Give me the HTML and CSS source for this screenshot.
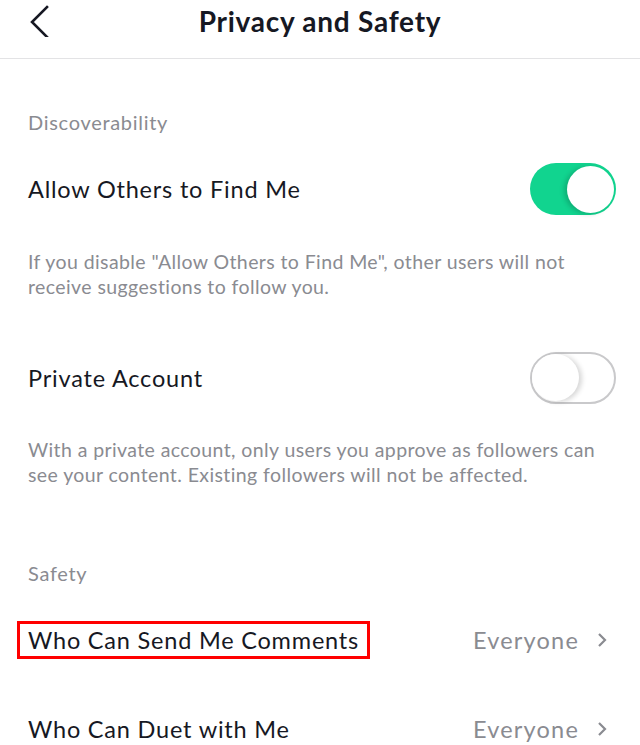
FILE: index.html
```html
<!DOCTYPE html>
<html>
<head>
<meta charset="utf-8">
<link rel="stylesheet" href="styles.css">
</head>
<body>
<header class="topbar">
  <svg class="back" width="24" height="36" viewBox="0 0 24 36"><polyline points="17,6 2,21 17,36" fill="none" stroke="#161823" stroke-width="2.6" stroke-linecap="square"/></svg>
  <h1 class="title">Privacy and Safety</h1>
</header>
<main class="content">
  <div class="section-label first">Discoverability</div>
  <div class="toggle-row">
    <span class="row-title">Allow Others to Find Me</span>
    <span class="switch on"><span class="knob"></span></span>
  </div>
  <p class="desc">If you disable "Allow Others to Find Me", other users will not receive suggestions to follow you.</p>
  <div class="toggle-row second">
    <span class="row-title">Private Account</span>
    <span class="switch off"><span class="knob"></span></span>
  </div>
  <p class="desc desc2">With a private account, only users you approve as followers can see your content. Existing followers will not be affected.</p>
  <div class="section-label safety">Safety</div>
  <div class="link-row">
    <span class="row-title highlighted">Who Can Send Me Comments</span>
    <span class="value">Everyone<svg class="chev" width="12" height="16" viewBox="0 0 12 16"><polyline points="3,2 9,8 3,14" fill="none" stroke="#8a8b91" stroke-width="2.2"/></svg></span>
  </div>
  <div class="link-row">
    <span class="row-title">Who Can Duet with Me</span>
    <span class="value">Everyone<svg class="chev" width="12" height="16" viewBox="0 0 12 16"><polyline points="3,2 9,8 3,14" fill="none" stroke="#8a8b91" stroke-width="2.2"/></svg></span>
  </div>
</main>
</body>
</html>
```
FILE: styles.css
```css
* { box-sizing: border-box; }
html, body { margin: 0; padding: 0; background: #fff; overflow: hidden; }
body { font-family: "Lato", "Liberation Sans", sans-serif; color: #161823; width: 640px; height: 745px; }

.topbar {
  position: relative;
  height: 59px;
  border-bottom: 1px solid #e3e3e5;
  display: flex;
  align-items: flex-start;
  justify-content: center;
}
.back { position: absolute; left: 30px; top: 1px; }
.title {
  margin: 0;
  font-size: 28px;
  font-weight: 700;
  line-height: 42px;
  letter-spacing: 0.75px;
}

.content { padding: 0 24px 0 28px; }

.section-label {
  height: 44px;
  line-height: 44px;
  font-size: 20px;
  letter-spacing: 0.7px;
  color: #8a8b91;
}
.section-label.first { margin-top: 41px; }
.section-label.safety { margin-top: 64px; }

.toggle-row {
  display: flex;
  align-items: center;
  justify-content: space-between;
  height: 52px;
  margin-top: 19px;
}
.toggle-row.second { margin-top: 53px; }

.row-title { font-size: 23.5px; line-height: 30px; letter-spacing: 0.8px; }

.switch {
  position: relative;
  width: 86px;
  height: 52px;
  border-radius: 26px;
}
.switch.on { background: #11d48f; }
.switch.off { background: #fff; border: 2.5px solid #c9c9cb; }
.knob {
  position: absolute;
  width: 47px;
  height: 47px;
  border-radius: 50%;
  background: #fff;
}
.switch.on .knob { right: 2px; top: 2.5px; box-shadow: -3px 1px 5px rgba(0,0,0,0.18); }
.switch.off .knob { left: 0; top: 0; box-shadow: 3px 1px 5px rgba(0,0,0,0.16); }

.desc {
  margin: 35px 0 0;
  font-size: 19.5px;
  line-height: 24.5px;
  letter-spacing: 0.4px;
  color: #8a8b91;
}
.desc.desc2 { margin-top: 34px; }

.link-row {
  display: flex;
  align-items: center;
  justify-content: space-between;
  height: 89px;
}
.highlighted {
  display: inline-block;
  border: 3px solid #ff0000;
  padding: 0 8px;
  line-height: 32px;
  margin-left: -11px;
}
.value {
  display: flex;
  align-items: center;
  font-size: 23.5px;
  letter-spacing: 1.2px;
  color: #8a8b91;
  margin-right: 8px;
}
.chev { margin-left: 17px; }
```
